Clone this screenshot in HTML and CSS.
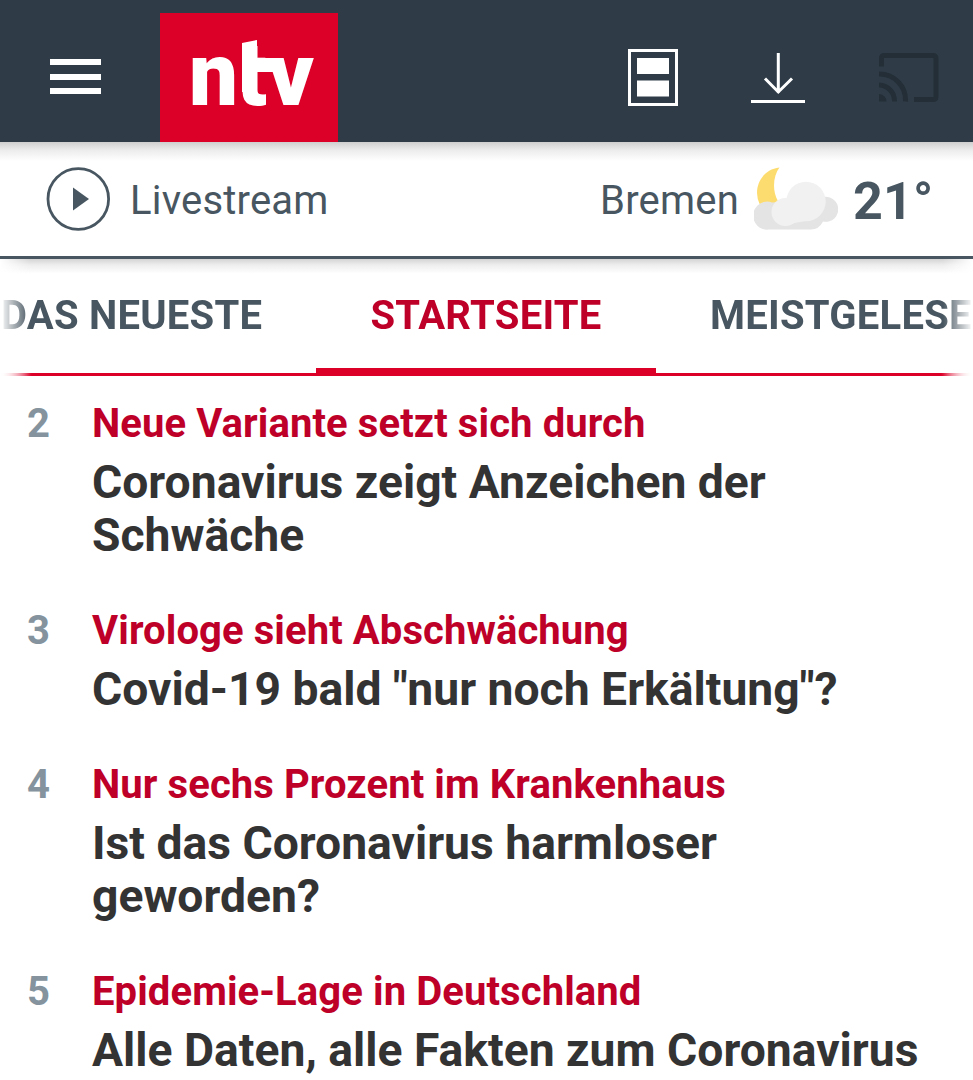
FILE: index.html
```html
<!DOCTYPE html>
<html lang="de">
<head>
<meta charset="utf-8">
<title>ntv</title>
<link rel="stylesheet" href="styles.css">
</head>
<body>
<header class="topbar">
  <div class="menu"><span></span><span></span><span></span></div>
  <svg class="logo" width="178" height="129" viewBox="0 0 178 129">
    <clipPath id="stem"><rect x="82" y="20" width="30" height="80"/></clipPath>
    <g class="logo-text">
      <text x="29" y="92" textLength="49" lengthAdjust="spacingAndGlyphs">n</text>
      <text x="76" y="92" textLength="31" lengthAdjust="spacingAndGlyphs" clip-path="url(#stem)">t</text>
      <text x="108" y="92" textLength="46" lengthAdjust="spacingAndGlyphs">v</text>
      <path d="M82 30l15-3v18h20v14H97v20H82z"/>
    </g>
  </svg>
  <div class="actions">
    <svg width="50" height="58" viewBox="0 0 50 58"><path fill="none" stroke="#fff" stroke-width="3" d="M1.500 2.500h47v54h-47z"/><path fill="#fff" d="M9 10h32v16H9zM9 32.500h32v16H9z"/></svg>
    <svg width="55" height="52" viewBox="0 0 55 52"><path fill="none" stroke="#fff" stroke-width="3" d="M27.300 1v40M14 26.500l13.300 13.500L41 26.500M0 49.500h54"/></svg>
    <svg width="61" height="50" viewBox="0 0 61 50"><g fill="none" stroke="#232e37" stroke-width="5"><path d="M2.500 14.500V6q0-2.500 3-2.500h48.500q3 0 3 3v38q0 3-3 3H35"/><path d="M0 22a26 26 0 0 1 26.500 27.500M0 33a16 16 0 0 1 15.500 16.500"/></g><path fill="#232e37" d="M0 42a7.500 7.500 0 0 1 7.500 7.500H0z"/></svg>
  </div>
</header>
<section class="infobar">
  <svg class="play" width="64" height="64" viewBox="0 0 64 64"><circle cx="32.300" cy="32" r="30.300" fill="none" stroke="#475660" stroke-width="2.800"/><path fill="#475660" d="M27 20.500v23l16-11.500z"/></svg>
  <span class="live">Livestream</span>
  <span class="city">Bremen</span>
  <svg class="weather" width="84" height="64" viewBox="0 0 84 64">
    <path fill="#fddc6f" d="M25.500 0.500C11 2 3 14 3 26q0 6 3 12h21l-3-4c-6-10-5-25 1.500-33.500z"/>
    <path fill="#e4e4e4" d="M15 62.500a14 14 0 1 1 3-27L64 32.500a12.500 12.500 0 1 1 5 22q-4 8-12 8z"/>
    <g fill="#f1f1f1"><circle cx="52" cy="34.500" r="19.700"/><circle cx="31.500" cy="45" r="14"/><path d="M34 42h18v12l-12 2z"/></g>
  </svg>
  <span class="temp">21°</span>
</section>
<nav class="tabs">
  <a class="tab">DAS NEUESTE</a>
  <a class="tab active">STARTSEITE</a>
  <a class="tab last">MEISTGELESE</a>
</nav>
<main class="list">
  <article class="item"><span class="num">2</span><div><h2 class="kicker">Neue Variante setzt sich durch</h2><p class="headline">Coronavirus zeigt Anzeichen der<br>Schwäche</p></div></article>
  <article class="item"><span class="num">3</span><div><h2 class="kicker">Virologe sieht Abschwächung</h2><p class="headline">Covid-19 bald "nur noch Erkältung"?</p></div></article>
  <article class="item"><span class="num">4</span><div><h2 class="kicker">Nur sechs Prozent im Krankenhaus</h2><p class="headline">Ist das Coronavirus harmloser<br>geworden?</p></div></article>
  <article class="item"><span class="num">5</span><div><h2 class="kicker">Epidemie-Lage in Deutschland</h2><p class="headline">Alle Daten, alle Fakten zum Coronavirus</p></div></article>
</main>
</body>
</html>
```
FILE: styles.css
```css
* { box-sizing: border-box; }
body {
  margin: 0;
  width: 973px;
  height: 1080px;
  overflow: hidden;
  background: #fff;
  color: #333;
  font-family: Roboto, "Liberation Sans", sans-serif;
  font-size: 40px;
}
svg { display: block; flex: none; }
.topbar {
  height: 142px;
  background: #2f3c48;
  display: flex;
  align-items: flex-end;
}
.menu {
  width: 160px;
  height: 83px;
  padding-left: 50px;
  display: flex;
  flex-direction: column;
  gap: 8.500px;
}
.menu span { width: 51px; height: 6px; background: #fff; }
.logo { background: #dc0028; }
.logo-text { fill: #fff; font-size: 89px; font-weight: 900; }
.actions {
  height: 94px;
  margin-left: 290px;
  display: flex;
  align-items: flex-start;
}
.actions svg:nth-child(2) { margin: 4px 0 0 73px; }
.actions svg:nth-child(3) { margin: 4px 0 0 73px; }
.infobar {
  height: 117px;
  display: flex;
  align-items: center;
  padding-left: 46px;
  color: #475660;
  letter-spacing: 0.200px;
  border-bottom: 3px solid #475660;
  background: linear-gradient(#cfcfcf, #ececec 8px, #fff 19px);
}
.live { margin-left: 20px; padding-top: 3px; }
.city { margin-left: auto; padding-top: 3px; }
.weather { margin-left: 15px; }
.temp { width: 120px; margin-left: 15px; padding-top: 5px; font-size: 52px; font-weight: 700; }
.tabs {
  height: 117px;
  display: flex;
  font-weight: 700;
  line-height: 48px;
  letter-spacing: 0.250px;
  color: #475660;
  background:
    linear-gradient(#d4d4d4, #eee 6px, transparent 15px),
    linear-gradient(90deg, #fff, #dc0028 32px, #dc0028 941px, #fff) 0 114px / 100% 3px no-repeat;
  -webkit-mask: linear-gradient(90deg, transparent, #000 30px, #000 943px, transparent);
  mask: linear-gradient(90deg, transparent, #000 30px, #000 943px, transparent);
}
.tab { width: 316px; flex: none; padding: 33px 0 0 1px; white-space: nowrap; }
.tab.active { width: 340px; padding-left: 0; text-align: center; color: #be0028; border-bottom: 8px solid #dc0028; }
.tab.last { padding-left: 54px; }
.list { padding: 23.500px 0 0 27px; display: flex; flex-direction: column; gap: 45.300px; }
.item { display: flex; }
.num { width: 65px; flex: none; color: #84939d; font-weight: 700; line-height: 48px; }
.kicker { margin: 0 0 8px; color: #be0028; font-size: 40px; font-weight: 700; line-height: 48px; letter-spacing: 0.090px; }
.headline { margin: 0; font-size: 46.250px; font-weight: 700; line-height: 53px; white-space: nowrap; }
```
